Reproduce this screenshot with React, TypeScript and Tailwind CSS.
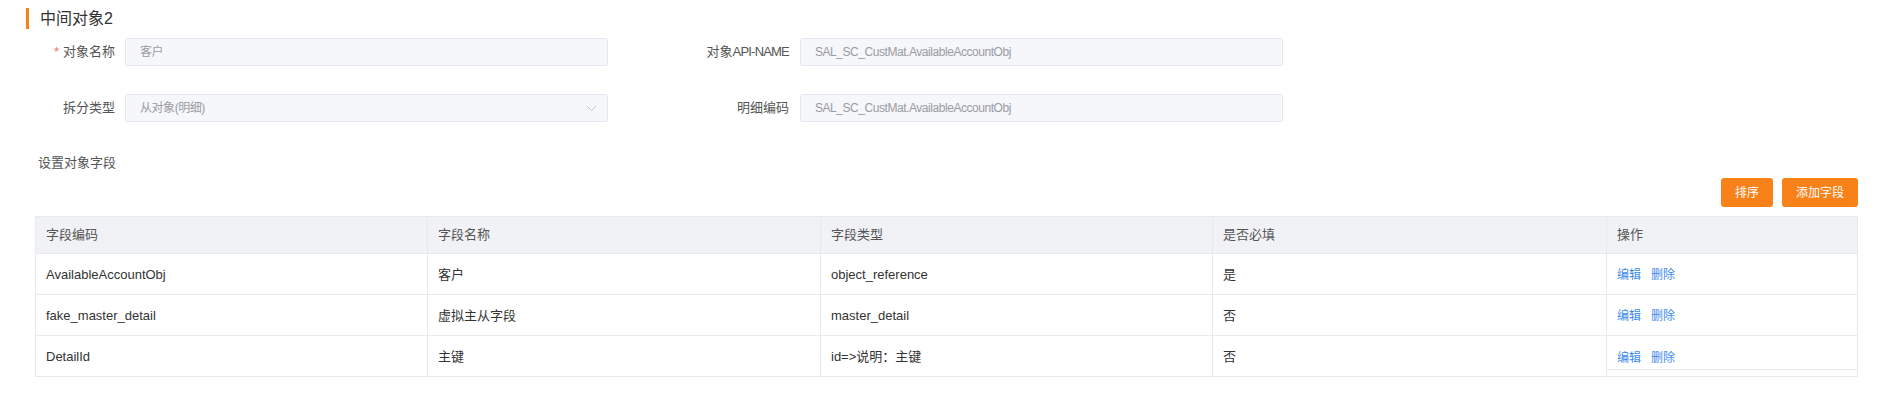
import React from "react"

const rows = [
  { code: "AvailableAccountObj", name: "客户", type: "object_reference", required: "是" },
  { code: "fake_master_detail", name: "虚拟主从字段", type: "master_detail", required: "否" },
  { code: "DetailId", name: "主键", type: "id=>说明：主键", required: "否" },
]

const cols = "grid grid-cols-[392px_393px_392px_394px_250px]"

function Field({ value, select }: { value: string; select?: boolean }) {
  return (
    <div className="flex h-[28px] w-[483px] items-center justify-between rounded-[3px] border border-[#e4e7ed] bg-[#f5f7fa] pl-[14px] pr-[10px] text-[12px] text-[#9a9ca3]">
      <span className="tracking-[-0.45px]">{value}</span>
      {select && (
        <svg width="11" height="7" viewBox="0 0 11 7" fill="none">
          <path d="M1 1l4.5 4.5L10 1" stroke="#c0c4cc" strokeWidth="1" />
        </svg>
      )}
    </div>
  )
}

export default function App() {
  return (
    <div
      className="h-[402px] w-[1886px] bg-white pt-[8px] text-[13px] text-[#555]"
      style={{ fontFamily: '"Liberation Sans", "Noto Sans CJK SC", sans-serif' }}
    >
      <div className="flex h-[21px] items-center pl-[26px]">
        <div className="h-[21px] w-[3px] bg-[#f8811a]" />
        <span className="ml-[11px] text-[16px] leading-[21px] text-[#333]">中间对象2</span>
      </div>

      <div className="mt-[9px] flex flex-col gap-[28px]">
        <div className="flex items-center">
          <div className="w-[115px] text-right">
            <span className="mr-[4px] text-[#f56c6c]">*</span>对象名称
          </div>
          <div className="ml-[10px]">
            <Field value="客户" />
          </div>
          <div className="w-[181px] text-right">
            对象<span className="tracking-[-0.8px]">API-NAME</span>
          </div>
          <div className="ml-[11px]">
            <Field value="SAL_SC_CustMat.AvailableAccountObj" />
          </div>
        </div>
        <div className="flex items-center">
          <div className="w-[115px] text-right">拆分类型</div>
          <div className="ml-[10px]">
            <Field value="从对象(明细)" select />
          </div>
          <div className="w-[181px] text-right">明细编码</div>
          <div className="ml-[11px]">
            <Field value="SAL_SC_CustMat.AvailableAccountObj" />
          </div>
        </div>
      </div>

      <div className="mt-[31px] h-[20px] pl-[38px] leading-[20px] text-[#555]">设置对象字段</div>

      <div className="mt-[5px] flex justify-end gap-[9px] pr-[28px]">
        <button className="h-[29px] w-[52px] rounded-[3px] bg-[#f8811a] text-[12px] text-white">排序</button>
        <button className="h-[29px] w-[76px] rounded-[3px] bg-[#f8811a] text-[12px] text-white">添加字段</button>
      </div>

      <div className="ml-[35px] mt-[9px] w-[1823px] border border-[#e8eaf0]">
        <div className={`${cols} h-[37px] border-b border-[#e8eaf0] bg-[#f0f2f6] text-[#555]`}>
          {["字段编码", "字段名称", "字段类型", "是否必填", "操作"].map((h, i) => (
            <div key={h} className={`flex items-center pl-[10px] ${i < 4 ? "border-r border-[#e8eaf0]" : ""}`}>
              {h}
            </div>
          ))}
        </div>
        {rows.map((r, idx) => {
          const last = idx === rows.length - 1
          return (
            <div
              key={r.code}
              className={`${cols} text-[#333] ${last ? "h-[40px]" : "h-[41px] border-b border-[#e8eaf0]"}`}
            >
              <div className="flex items-center border-r border-[#e8eaf0] pl-[10px] pt-[2px]">{r.code}</div>
              <div className="flex items-center border-r border-[#e8eaf0] pl-[10px] pt-[2px]">{r.name}</div>
              <div className="flex items-center border-r border-[#e8eaf0] pl-[10px] pt-[2px]">{r.type}</div>
              <div className="flex items-center border-r border-[#e8eaf0] pl-[10px] pt-[2px]">{r.required}</div>
              <div className="flex flex-col">
                <div
                  className={`flex items-center gap-[10px] pl-[10px] text-[12px] text-[#3d8bea] ${
                    last ? "h-[34px] border-b border-[#e8eaf0] pt-[10px]" : "h-full pt-[2px]"
                  }`}
                >
                  <span>编辑</span>
                  <span>删除</span>
                </div>
              </div>
            </div>
          )
        })}
      </div>
    </div>
  )
}
